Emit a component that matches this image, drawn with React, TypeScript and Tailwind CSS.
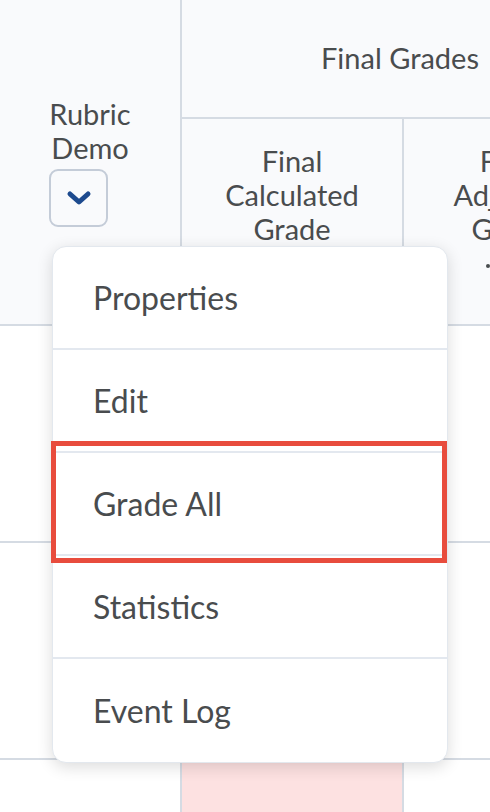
const menuItems = ["Properties", "Edit", "Grade All", "Statistics", "Event Log"];

function Chevron() {
  return (
    <svg width="26" height="16" viewBox="0 0 26 16" fill="none">
      <path
        d="M4 4 L13 12 L22 4"
        stroke="#1d4a8e"
        strokeWidth="5"
        strokeLinecap="round"
        strokeLinejoin="round"
      />
    </svg>
  );
}

export default function App() {
  return (
    <div className="relative w-[490px] h-[812px] overflow-hidden bg-white font-['Lato','Open_Sans',sans-serif] text-[#494c4e]">
      {/* Header */}
      <div className="flex h-[326px] bg-[#f9fafc] border-b-2 border-[#d5dbe3]">
        <div className="w-[182px] shrink-0 border-r-2 border-[#d5dbe3] flex justify-center pt-[97px]">
          <div className="flex flex-col items-start">
            <div className="text-[29px] leading-[34px]">
              Rubric
              <br />
              <span className="ml-[2px]">Demo</span>
            </div>
            <button className="mt-[4px] w-[59px] h-[58px] rounded-[9px] border-2 border-[#c4ccd8] bg-[#f9fafc] flex items-center justify-center">
              <Chevron />
            </button>
          </div>
        </div>
        <div className="flex flex-col shrink-0 w-[436px]">
          <div className="h-[119px] shrink-0 border-b-2 border-[#d5dbe3] flex items-center justify-center text-[29px] pb-[2px]">
            Final Grades
          </div>
          <div className="flex flex-1">
            <div className="w-[222px] shrink-0 border-r-2 border-[#d5dbe3] flex justify-center pt-[25px]">
              <div className="text-[29px] leading-[34px] text-center">
                Final
                <br />
                Calculated
                <br />
                Grade
              </div>
            </div>
            <div className="w-[212px] shrink-0 flex flex-col pt-[25px]">
              <div className="text-[29px] leading-[34px] text-center">
                Final
                <br />
                Adjusted
                <br />
                Grade
              </div>
              <div className="mt-[18px] ml-[82px] w-[4px] h-[4px] rounded-full bg-[#494c4e]" />
            </div>
          </div>
        </div>
      </div>

      {/* Body rows */}
      {[0, 1].map((r) => (
        <div key={r} className="flex h-[217px] border-b-2 border-[#d5dbe3]">
          <div className="w-[182px] shrink-0 border-r-2 border-[#d5dbe3]" />
          <div className="w-[222px] shrink-0 border-r-2 border-[#d5dbe3]" />
          <div className="flex-1" />
        </div>
      ))}
      <div className="flex h-[60px]">
        <div className="w-[182px] shrink-0 border-r-2 border-[#d5dbe3]" />
        <div className="w-[222px] shrink-0 border-r-2 border-[#d5dbe3] bg-[#fde1e1]" />
        <div className="flex-1" />
      </div>

      {/* Context menu */}
      <div className="absolute left-[52px] top-[246px] w-[396px] rounded-[14px] bg-white border border-[#e3e8ee] shadow-[0_4px_16px_rgba(0,0,0,0.14)] overflow-hidden">
        {menuItems.map((label, i) => (
          <div
            key={label}
            className={`h-[103px] flex items-center pl-[40px] text-[32px] ${
              i < menuItems.length - 1 ? "border-b-2 border-[#e3e8ef]" : ""
            }`}
          >
            {label}
          </div>
        ))}
      </div>

      {/* Highlight box */}
      <div className="absolute left-[51px] top-[441px] w-[396px] h-[122px] border-[5px] border-[#e84c3d]" />
    </div>
  );
}
